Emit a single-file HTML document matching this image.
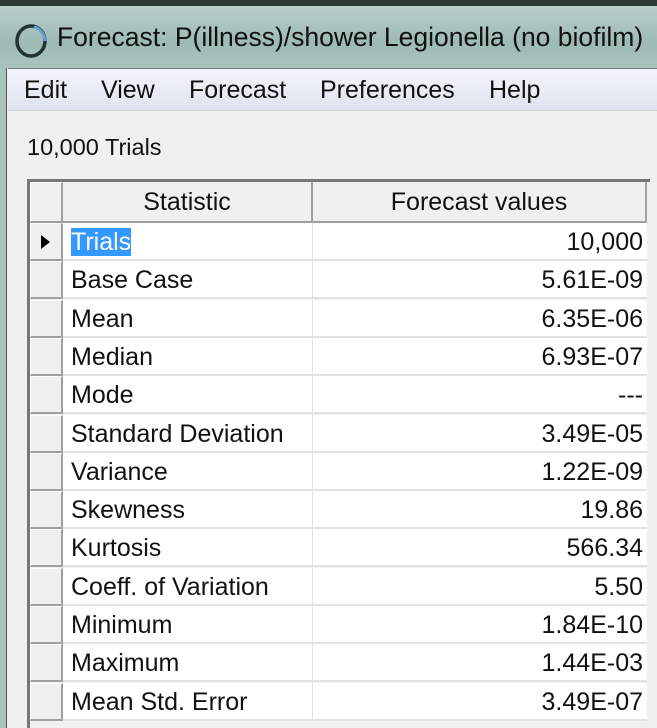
<!DOCTYPE html>
<html><head><style>
*{margin:0;padding:0;box-sizing:border-box}
body{width:657px;height:728px;overflow:hidden;background:#f0f0f0;font-family:"Liberation Sans",sans-serif;position:relative}
#top{position:absolute;left:0;top:0;width:657px;height:6px;background:#2a3a32}
#title{position:absolute;left:0;top:6px;width:657px;height:62px;background:linear-gradient(#b9cfc9,#9dbab3 60%,#a9c4bd)}
#title span{position:absolute;left:57px;top:16px;font-size:26.5px;color:#111;white-space:nowrap}
#leftframe{position:absolute;left:0;top:68px;width:7px;height:660px;background:#a9c4bd;border-right:1px solid #555}
#menu{position:absolute;left:8px;top:68px;width:649px;height:43px;background:linear-gradient(#f4f6fb,#dde3ef);border-top:1px solid #6a7a80;border-bottom:1px solid #c8ccd4}
#menu span{position:absolute;top:7px;font-size:25px;color:#111}
#trials{position:absolute;left:27px;top:134px;font-size:23.5px;color:#111}
#grid{position:absolute;left:27px;top:179px;width:623px;height:549px;border:3px solid #777;border-right:none;border-bottom:none;background:#f0f0f0}
.row{position:absolute;left:0;height:38px;width:620px}
.ind{position:absolute;left:0;top:0;width:33px;height:38px;background:#f0f0f0;border-right:2px solid #a0a0a0;border-bottom:2px solid #a0a0a0;border-left:1px solid #fff;border-top:1px solid #fff}
.c1{position:absolute;left:33px;top:0;width:250px;height:38px;background:#fff;border-right:1px solid #e2e2e2;border-bottom:2px solid #e2e2e2;font-size:25px;padding:5px 0 0 8px;color:#111;white-space:nowrap}
.c2{position:absolute;left:283px;top:0;width:334px;height:38px;background:#fff;border-bottom:2px solid #e2e2e2;font-size:25px;padding:5px 4px 0 0;text-align:right;color:#111}
.hdr .c1,.hdr .c2{background:#f0f0f0;text-align:center;padding:6px 0 0;border-right:2px solid #a0a0a0;border-bottom:2px solid #a0a0a0}
.sel{background:#3399ff;color:#fff}
</style></head><body>
<div id="top"></div>
<div id="title">
<svg style="position:absolute;left:12px;top:16px" width="38" height="38" viewBox="0 0 38 38"><ellipse cx="19" cy="19" rx="14" ry="15" fill="none" stroke="#233" stroke-width="3.5"/><path d="M22 5 A14 15 0 0 1 33 19" fill="none" stroke="#6aa0d8" stroke-width="3"/></svg>
<span>Forecast: P(illness)/shower Legionella (no biofilm)</span></div>
<div id="leftframe"></div>
<div id="menu"><span style="left:16px">Edit</span><span style="left:93px">View</span><span style="left:181px">Forecast</span><span style="left:312px">Preferences</span><span style="left:481px">Help</span></div>
<div id="trials">10,000 Trials</div>
<div id="grid">
<div class="row hdr" style="top:0;height:41px"><div class="ind" style="height:41px"></div><div class="c1" style="height:41px">Statistic</div><div class="c2" style="height:41px">Forecast values</div></div>
<div class="row" style="top:41px"><div class="ind"><svg style="position:absolute;left:10px;top:11px" width="10" height="14"><path d="M0 0L9 7L0 14Z" fill="#000"/></svg></div><div class="c1"><span class="sel">Trials</span></div><div class="c2">10,000</div></div>
<div class="row" style="top:79.3px"><div class="ind"></div><div class="c1">Base Case</div><div class="c2">5.61E-09</div></div>
<div class="row" style="top:117.6px"><div class="ind"></div><div class="c1">Mean</div><div class="c2">6.35E-06</div></div>
<div class="row" style="top:155.9px"><div class="ind"></div><div class="c1">Median</div><div class="c2">6.93E-07</div></div>
<div class="row" style="top:194.2px"><div class="ind"></div><div class="c1">Mode</div><div class="c2">---</div></div>
<div class="row" style="top:232.5px"><div class="ind"></div><div class="c1">Standard Deviation</div><div class="c2">3.49E-05</div></div>
<div class="row" style="top:270.8px"><div class="ind"></div><div class="c1">Variance</div><div class="c2">1.22E-09</div></div>
<div class="row" style="top:309.1px"><div class="ind"></div><div class="c1">Skewness</div><div class="c2">19.86</div></div>
<div class="row" style="top:347.4px"><div class="ind"></div><div class="c1">Kurtosis</div><div class="c2">566.34</div></div>
<div class="row" style="top:385.7px"><div class="ind"></div><div class="c1">Coeff. of Variation</div><div class="c2">5.50</div></div>
<div class="row" style="top:424px"><div class="ind"></div><div class="c1">Minimum</div><div class="c2">1.84E-10</div></div>
<div class="row" style="top:462.3px"><div class="ind"></div><div class="c1">Maximum</div><div class="c2">1.44E-03</div></div>
<div class="row" style="top:500.6px"><div class="ind"></div><div class="c1">Mean Std. Error</div><div class="c2">3.49E-07</div></div>
</div>
</body></html>
